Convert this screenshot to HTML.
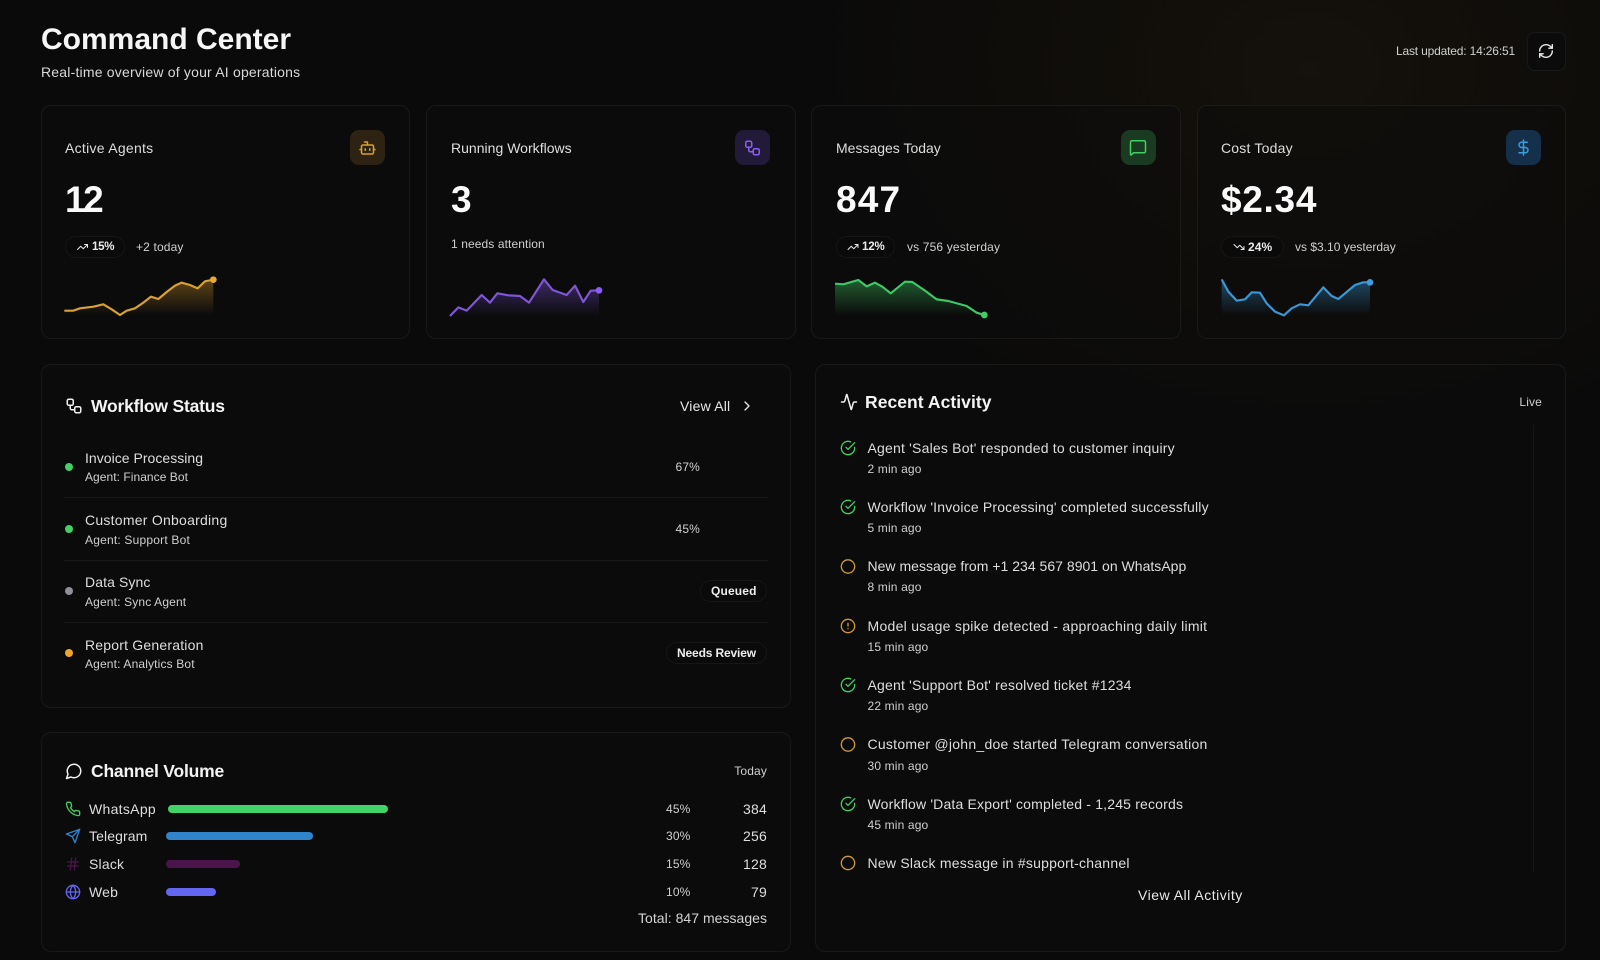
<!DOCTYPE html>
<html lang="en"><head><meta charset="utf-8"><title>Command Center</title>
<style>
html,body{margin:0;padding:0;width:1600px;height:960px;overflow:hidden;background:#0a0a0a}
body{position:relative;font-family:"Liberation Sans",sans-serif;color:#e4e4e4;
background:radial-gradient(ellipse 520px 420px at 1310px 70px,rgba(130,85,20,.09),rgba(130,85,20,0) 100%),#0a0a0a}
.box{position:absolute;box-sizing:border-box;border:1px solid rgba(255,255,255,.06);border-radius:10px;background:rgba(12,12,12,.55)}
.tile{position:absolute;top:130px;width:35px;height:35px;border-radius:9px}
.pill{position:absolute;box-sizing:border-box;height:22px;border:1px solid rgba(255,255,255,.05);border-radius:11px;background:#0a0a0a}
.t{position:absolute;white-space:nowrap;line-height:20px;font-size:14px;letter-spacing:.2px;color:#dedede}
.s{font-size:12px;letter-spacing:.15px;color:#d0d0d0}
.b{font-size:12px;font-weight:700;letter-spacing:.1px;color:#ececec}
.v{font-size:37px;font-weight:700;color:#fafafa;line-height:40px;letter-spacing:.5px}
.h{font-size:17.5px;font-weight:700;color:#f4f4f4;letter-spacing:-.2px}
.dot{position:absolute;width:8px;height:8px;border-radius:50%}
.hr{position:absolute;left:64px;width:704px;height:1px;background:rgba(255,255,255,.055)}
.bar{position:absolute;height:8px;border-radius:4px}
svg.full{position:absolute;left:0;top:0}
.i{fill:none;stroke-width:2;stroke-linecap:round;stroke-linejoin:round}
</style></head><body>

<div class="t" style="left:41px;top:20px;font-size:30px;line-height:40px;font-weight:700;color:#f6f6f6;letter-spacing:0">Command Center</div>
<div class="t" style="left:41px;top:62px;letter-spacing:.2px;color:#d8d8d8">Real-time overview of your AI operations</div>
<div class="t s" style="right:85px;top:41px;letter-spacing:-.17px">Last updated: 14:26:51</div>
<div class="box" style="left:1527px;top:32px;width:39px;height:39px;border-radius:8px;background:#0b0b0b"></div>

<div class="box" style="left:41px;top:105px;width:369px;height:234px"></div>
<div class="box" style="left:426px;top:105px;width:370px;height:234px"></div>
<div class="box" style="left:811px;top:105px;width:370px;height:234px"></div>
<div class="box" style="left:1197px;top:105px;width:369px;height:234px"></div>

<div class="tile" style="left:350px;background:#2e2312"></div>
<div class="tile" style="left:735px;background:#211a38"></div>
<div class="tile" style="left:1121px;background:#1b3a22"></div>
<div class="tile" style="left:1506px;background:#14304a"></div>

<div class="t" style="left:65px;top:138px;letter-spacing:.28px">Active Agents</div>
<div class="t" style="left:451px;top:138px;letter-spacing:.02px">Running Workflows</div>
<div class="t" style="left:836px;top:138px;letter-spacing:0">Messages Today</div>
<div class="t" style="left:1221px;top:138px">Cost Today</div>

<div class="t v" style="left:65px;top:180px;letter-spacing:-2.5px">12</div>
<div class="t v" style="left:451px;top:180px">3</div>
<div class="t v" style="left:836px;top:180px;letter-spacing:1.2px">847</div>
<div class="t v" style="left:1221px;top:180px;letter-spacing:.7px">$2.34</div>

<div class="pill" style="left:65px;top:236px;width:60px"></div>
<div class="t b" style="left:92px;top:237px;font-size:11.5px;letter-spacing:-.25px">15%</div>
<div class="t s" style="left:136px;top:237px">+2 today</div>
<div class="t s" style="left:451px;top:234px;letter-spacing:.1px">1 needs attention</div>
<div class="pill" style="left:836px;top:236px;width:59px"></div>
<div class="t b" style="left:862px;top:237px;font-size:11.5px;letter-spacing:-.15px">12%</div>
<div class="t s" style="left:907px;top:237px">vs 756 yesterday</div>
<div class="pill" style="left:1221px;top:236px;width:63px"></div>
<div class="t b" style="left:1248px;top:237px">24%</div>
<div class="t s" style="left:1295px;top:237px;letter-spacing:0">vs $3.10 yesterday</div>

<div class="box" style="left:41px;top:364px;width:750px;height:344px"></div>
<div class="box" style="left:41px;top:732px;width:750px;height:220px"></div>
<div class="box" style="left:815px;top:364px;width:751px;height:588px"></div>

<div class="t h" style="left:91px;top:396px">Workflow Status</div>
<div class="t" style="left:680px;top:396px;color:#e8e8e8">View All</div>

<div class="dot" style="left:65px;top:463px;background:#41cf66"></div>
<div class="t" style="left:85px;top:448px;letter-spacing:.03px">Invoice Processing</div>
<div class="t s" style="left:85px;top:467px;letter-spacing:.05px">Agent: Finance Bot</div>
<div class="t s" style="right:900px;top:457px">67%</div>
<div class="hr" style="top:497px"></div>

<div class="dot" style="left:65px;top:525px;background:#41cf66"></div>
<div class="t" style="left:85px;top:510px;letter-spacing:.25px">Customer Onboarding</div>
<div class="t s" style="left:85px;top:530px;letter-spacing:.2px">Agent: Support Bot</div>
<div class="t s" style="right:900px;top:519px">45%</div>
<div class="hr" style="top:560px"></div>

<div class="dot" style="left:65px;top:587px;background:#8f8f98"></div>
<div class="t" style="left:85px;top:572px;letter-spacing:.1px">Data Sync</div>
<div class="t s" style="left:85px;top:592px">Agent: Sync Agent</div>
<div class="pill" style="left:700px;top:580px;width:67px"></div>
<div class="t b" style="left:711px;top:581px;letter-spacing:.15px">Queued</div>
<div class="hr" style="top:622px"></div>

<div class="dot" style="left:65px;top:649px;background:#eda52e"></div>
<div class="t" style="left:85px;top:635px">Report Generation</div>
<div class="t s" style="left:85px;top:654px;letter-spacing:.15px">Agent: Analytics Bot</div>
<div class="pill" style="left:666px;top:642px;width:101px"></div>
<div class="t b" style="left:677px;top:643px;letter-spacing:-.15px">Needs Review</div>

<div class="t h" style="left:91px;top:761px">Channel Volume</div>
<div class="t s" style="right:833px;top:761px">Today</div>

<div class="t" style="left:89px;top:799px;letter-spacing:.3px">WhatsApp</div>
<div class="bar" style="left:168px;top:805px;width:220px;background:#43d268"></div>
<div class="t s" style="left:666px;top:799px">45%</div>
<div class="t" style="right:833px;top:799px">384</div>

<div class="t" style="left:89px;top:826px;letter-spacing:.1px">Telegram</div>
<div class="bar" style="left:166px;top:832px;width:147px;background:#2f84cc"></div>
<div class="t s" style="left:666px;top:826px">30%</div>
<div class="t" style="right:833px;top:826px">256</div>

<div class="t" style="left:89px;top:854px">Slack</div>
<div class="bar" style="left:166px;top:860px;width:74px;background:#4a154b"></div>
<div class="t s" style="left:666px;top:854px">15%</div>
<div class="t" style="right:833px;top:854px">128</div>

<div class="t" style="left:89px;top:882px">Web</div>
<div class="bar" style="left:166px;top:888px;width:50px;background:#6366f1"></div>
<div class="t s" style="left:666px;top:882px">10%</div>
<div class="t" style="right:833px;top:882px">79</div>

<div class="t" style="right:833px;top:908px;letter-spacing:.03px;color:#d4d4d4">Total: 847 messages</div>

<div class="t h" style="left:865px;top:392px;letter-spacing:.05px">Recent Activity</div>
<div class="t s" style="right:58px;top:392px">Live</div>
<div style="position:absolute;left:1533px;top:425px;width:1px;height:447px;background:rgba(255,255,255,.05)"></div>

<div class="t" style="left:867.5px;top:438px">Agent 'Sales Bot' responded to customer inquiry</div>
<div class="t s" style="left:867.5px;top:459px">2 min ago</div>
<div class="t" style="left:867.5px;top:497px;letter-spacing:.18px">Workflow 'Invoice Processing' completed successfully</div>
<div class="t s" style="left:867.5px;top:518px">5 min ago</div>
<div class="t" style="left:867.5px;top:556px;letter-spacing:.02px">New message from +1 234 567 8901 on WhatsApp</div>
<div class="t s" style="left:867.5px;top:577px">8 min ago</div>
<div class="t" style="left:867.5px;top:616px;letter-spacing:.28px">Model usage spike detected - approaching daily limit</div>
<div class="t s" style="left:867.5px;top:637px">15 min ago</div>
<div class="t" style="left:867.5px;top:675px">Agent 'Support Bot' resolved ticket #1234</div>
<div class="t s" style="left:867.5px;top:696px">22 min ago</div>
<div class="t" style="left:867.5px;top:734px;letter-spacing:.26px">Customer @john_doe started Telegram conversation</div>
<div class="t s" style="left:867.5px;top:756px">30 min ago</div>
<div class="t" style="left:867.5px;top:794px;letter-spacing:.18px">Workflow 'Data Export' completed - 1,245 records</div>
<div class="t s" style="left:867.5px;top:815px">45 min ago</div>
<div class="t" style="left:867.5px;top:853px;letter-spacing:.23px">New Slack message in #support-channel</div>
<div class="t" style="left:1138px;top:885px;letter-spacing:.5px;color:#e8e8e8">View All Activity</div>

<svg class="full" width="1600" height="960" viewBox="0 0 1600 960" xmlns="http://www.w3.org/2000/svg">
<defs>
<linearGradient id="ga" gradientUnits="userSpaceOnUse" x1="0" y1="480" x2="0" y2="585"><stop offset="0" stop-color="#e0a030" stop-opacity=".38"/><stop offset="1" stop-color="#e0a030" stop-opacity="0"/></linearGradient>
<linearGradient id="gp" gradientUnits="userSpaceOnUse" x1="0" y1="480" x2="0" y2="590"><stop offset="0" stop-color="#8b5cf6" stop-opacity=".38"/><stop offset="1" stop-color="#8b5cf6" stop-opacity="0"/></linearGradient>
<linearGradient id="gg" gradientUnits="userSpaceOnUse" x1="0" y1="480" x2="0" y2="585"><stop offset="0" stop-color="#3fcf63" stop-opacity=".42"/><stop offset="1" stop-color="#3fcf63" stop-opacity="0"/></linearGradient>
<linearGradient id="gb" gradientUnits="userSpaceOnUse" x1="0" y1="480" x2="0" y2="585"><stop offset="0" stop-color="#3b9ddd" stop-opacity=".42"/><stop offset="1" stop-color="#3b9ddd" stop-opacity="0"/></linearGradient>
<symbol id="wf" viewBox="0 0 24 24"><rect x="3" y="3" width="8" height="8" rx="2"/><path d="M7 11v4a2 2 0 0 0 2 2h4"/><rect x="13" y="13" width="8" height="8" rx="2"/></symbol>
<symbol id="tu" viewBox="0 0 24 24"><path d="M22 7 13.5 15.5 8.5 10.5 2 17"/><path d="M16 7h6v6"/></symbol>
<symbol id="td" viewBox="0 0 24 24"><path d="M22 17 13.5 8.5 8.5 13.5 2 7"/><path d="M16 17h6v-6"/></symbol>
<symbol id="ck" viewBox="0 0 24 24"><path d="M22 11.08V12a10 10 0 1 1-5.93-9.14"/><path d="m9 11 3 3L22 4"/></symbol>
<symbol id="ci" viewBox="0 0 24 24"><circle cx="12" cy="12" r="10"/></symbol>
<symbol id="al" viewBox="0 0 24 24"><circle cx="12" cy="12" r="10"/><path d="M12 8v4"/><path d="M12 16h.01"/></symbol>
</defs>

<!-- sparklines -->
<g transform="translate(50 120) scale(.33333)">
<path fill="url(#ga)" d="M43 572L70 572 90 565 130 560 160 553 185 568 210 585 230 572 255 565 280 548 303 530 325 537 350 516 375 497 395 488 420 495 443 505 465 484 490 479V585H43Z"/>
<path fill="none" stroke="#d9a033" stroke-width="6.5" stroke-linejoin="round" d="M43 572L70 572 90 565 130 560 160 553 185 568 210 585 230 572 255 565 280 548 303 530 325 537 350 516 375 497 395 488 420 495 443 505 465 484 490 479"/>
<circle cx="490" cy="479" r="10" fill="#e5a935"/></g>
<g transform="translate(440 120) scale(.33333)">
<path fill="url(#gp)" d="M30 588L55 562 80 572 125 525 150 548 172 520 205 526 240 528 267 548 312 478 338 510 380 525 405 497 430 546 452 512 477 511V590H30Z"/>
<path fill="none" stroke="#7f56d9" stroke-width="6.5" stroke-linejoin="round" d="M30 588L55 562 80 572 125 525 150 548 172 520 205 526 240 528 267 548 312 478 338 510 380 525 405 497 430 546 452 512 477 511"/>
<circle cx="477" cy="511" r="10" fill="#8b5cf6"/></g>
<g transform="translate(825 120) scale(.33333)">
<path fill="url(#gg)" d="M30 491L55 493 100 480 125 499 150 488 172 500 197 520 240 485 262 486 300 512 335 538 370 543 425 558 455 578 478 585V585H30Z"/>
<path fill="none" stroke="#3fc765" stroke-width="6.5" stroke-linejoin="round" d="M30 491L55 493 100 480 125 499 150 488 172 500 197 520 240 485 262 486 300 512 335 538 370 543 425 558 455 578 478 585"/>
<circle cx="478" cy="585" r="10" fill="#3fcf63"/></g>
<g transform="translate(1210 120) scale(.33333)">
<path fill="url(#gb)" d="M35 478L55 515 80 542 105 538 125 517 150 518 170 550 195 575 222 586 245 565 270 553 295 556 340 502 365 528 385 537 435 495 460 487 480 487V585H35Z"/>
<path fill="none" stroke="#3a97d6" stroke-width="6.5" stroke-linejoin="round" d="M35 478L55 515 80 542 105 538 125 517 150 518 170 550 195 575 222 586 245 565 270 553 295 556 340 502 365 528 385 537 435 495 460 487 480 487"/>
<circle cx="480" cy="487" r="10" fill="#3b9ddd"/></g>

<!-- refresh -->
<g class="i" stroke="#e8e8e8" transform="translate(1537.6 42.6) scale(.7)"><path d="M3 12a9 9 0 0 1 9-9 9.75 9.75 0 0 1 6.74 2.74L21 8"/><path d="M21 3v5h-5"/><path d="M21 12a9 9 0 0 1-9 9 9.75 9.75 0 0 1-6.74-2.74L3 16"/><path d="M8 16H3v5"/></g>

<!-- tile icons -->
<g class="i" stroke="#d9a033" transform="translate(358.5 139) scale(.75)"><path d="M12 8V4H8"/><rect x="4" y="8" width="16" height="12" rx="2"/><path d="M2 14h2"/><path d="M20 14h2"/><path d="M15 13v2"/><path d="M9 13v2"/></g>
<use href="#wf" class="i" stroke="#8b5cf6" x="743.5" y="139" width="18" height="18"/>
<g class="i" stroke="#3fcf63" transform="translate(1129 138.5) scale(.75)"><path d="M22 17a2 2 0 0 1-2 2H6.828a2 2 0 0 0-1.414.586l-2.202 2.202A.71.71 0 0 1 2 21.286V5a2 2 0 0 1 2-2h16a2 2 0 0 1 2 2z"/></g>
<g class="i" stroke="#3b9ddd" transform="translate(1514.5 138.5) scale(.75)"><path d="M12 2v20"/><path d="M17 5H9.5a3.5 3.5 0 0 0 0 7h5a3.5 3.5 0 0 1 0 7H6"/></g>

<!-- pill icons -->
<use href="#tu" class="i" stroke="#e8e8e8" x="76.5" y="241" width="12" height="12"/>
<use href="#tu" class="i" stroke="#e8e8e8" x="847" y="241" width="12" height="12"/>
<use href="#td" class="i" stroke="#e8e8e8" x="1233" y="241" width="12" height="12"/>

<!-- panel heads -->
<use href="#wf" class="i" stroke="#f0f0f0" x="65" y="397" width="18" height="18"/>
<g class="i" stroke="#e8e8e8" transform="translate(739 398) scale(.667)"><path d="m9 18 6-6-6-6"/></g>
<g class="i" stroke="#f0f0f0" transform="translate(65 762) scale(.75)"><path d="M7.9 20A9 9 0 1 0 4 16.1L2 22Z"/></g>
<g class="i" stroke="#f0f0f0" transform="translate(840 393) scale(.75)"><path d="M22 12h-2.48a2 2 0 0 0-1.93 1.46l-2.35 8.36a.25.25 0 0 1-.48 0L9.24 2.18a.25.25 0 0 0-.48 0l-2.35 8.36A2 2 0 0 1 4.49 12H2"/></g>

<!-- channel icons -->
<g class="i" stroke="#3fcf63" transform="translate(65 801) scale(.667)"><path d="M22 16.92v3a2 2 0 0 1-2.18 2 19.79 19.79 0 0 1-8.63-3.07 19.5 19.5 0 0 1-6-6 19.79 19.79 0 0 1-3.07-8.67A2 2 0 0 1 4.11 2h3a2 2 0 0 1 2 1.72 12.84 12.84 0 0 0 .7 2.81 2 2 0 0 1-.45 2.11L8.09 9.91a16 16 0 0 0 6 6l1.27-1.27a2 2 0 0 1 2.11-.45 12.84 12.84 0 0 0 2.81.7A2 2 0 0 1 22 16.92z"/></g>
<g class="i" stroke="#2f84cc" transform="translate(65 828) scale(.667)"><path d="m22 2-7 20-4-9-9-4Z"/><path d="M22 2 11 13"/></g>
<g class="i" stroke="#4a154b" transform="translate(65 856) scale(.667)"><path d="M4 9h16"/><path d="M4 15h16"/><path d="M10 3 8 21"/><path d="M16 3l-2 18"/></g>
<g class="i" stroke="#6366f1" transform="translate(65 884) scale(.667)"><circle cx="12" cy="12" r="10"/><path d="M12 2a14.5 14.5 0 0 0 0 20 14.5 14.5 0 0 0 0-20"/><path d="M2 12h20"/></g>

<!-- activity icons -->
<use href="#ck" class="i" stroke="#3fcf63" x="840" y="440" width="16" height="16"/>
<use href="#ck" class="i" stroke="#3fcf63" x="840" y="499" width="16" height="16"/>
<use href="#ci" class="i" stroke="#cf9a35" x="840" y="558.5" width="16" height="16"/>
<use href="#al" class="i" stroke="#cf9a35" x="840" y="618" width="16" height="16"/>
<use href="#ck" class="i" stroke="#3fcf63" x="840" y="677" width="16" height="16"/>
<use href="#ci" class="i" stroke="#cf9a35" x="840" y="736.5" width="16" height="16"/>
<use href="#ck" class="i" stroke="#3fcf63" x="840" y="796" width="16" height="16"/>
<use href="#ci" class="i" stroke="#cf9a35" x="840" y="855" width="16" height="16"/>
</svg>
</body></html>
